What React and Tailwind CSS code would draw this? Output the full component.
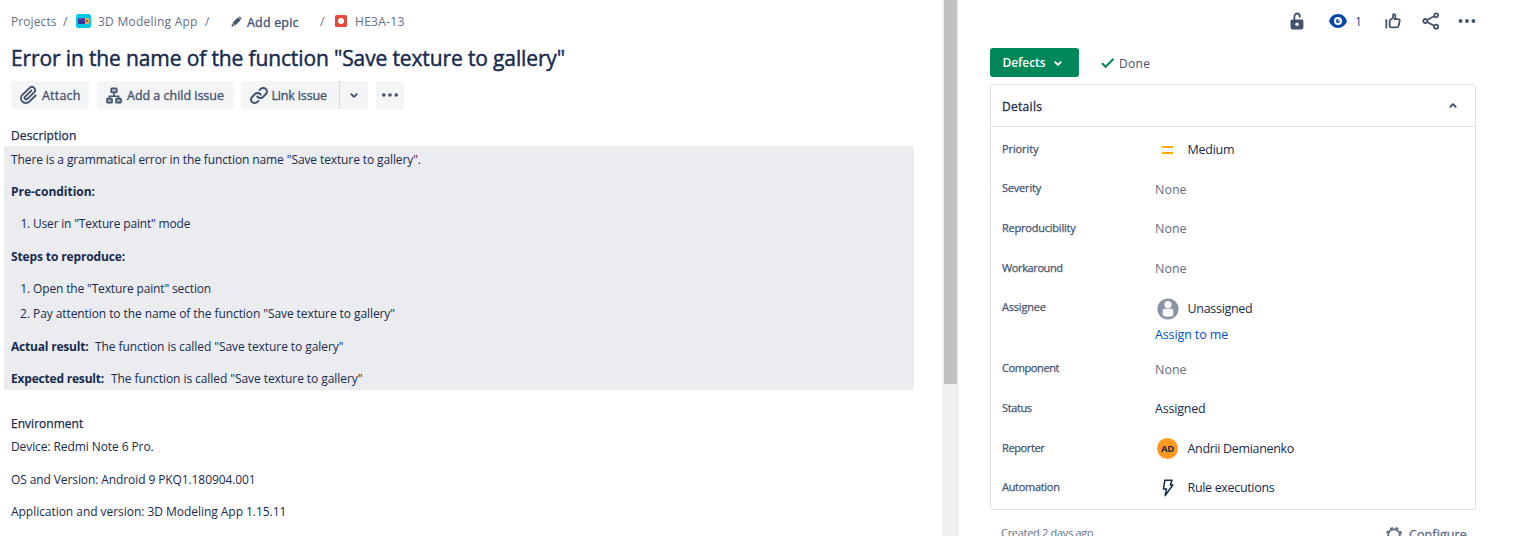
function Chevron({ className }) {
  return (
    <svg viewBox="0 0 24 24" className={className} fill="currentColor">
      <path d="M8.292 10.293a1.009 1.009 0 000 1.419l2.939 2.965c.218.215.5.322.779.322s.556-.107.769-.322l2.93-2.955a1.01 1.01 0 000-1.419.987.987 0 00-1.406 0l-2.298 2.317-2.307-2.327a.99.99 0 00-1.406 0z" />
    </svg>
  );
}

function Dots({ className }) {
  return (
    <svg viewBox="0 0 24 24" className={className} fill="currentColor">
      <circle cx="5.2" cy="12" r="2" />
      <circle cx="12" cy="12" r="2" />
      <circle cx="18.8" cy="12" r="2" />
    </svg>
  );
}

function AttachIcon() {
  return (
    <svg viewBox="0 0 24 24" className="size-6 shrink-0" fill="currentColor">
      <path d="M11.643 17.965c-1.53 1.495-4.016 1.496-5.542.004a3.773 3.773 0 01.002-5.412l7.147-6.985a2.316 2.316 0 013.22-.004c.893.873.895 2.282.004 3.153l-6.703 6.55a.653.653 0 01-.914-.008.62.62 0 010-.902l6.229-6.087a.941.941 0 000-1.353.995.995 0 00-1.384 0l-6.23 6.087a2.502 2.502 0 000 3.607 2.643 2.643 0 003.683.009l6.703-6.55a4.074 4.074 0 00-.003-5.859 4.306 4.306 0 00-5.986-.003l-7.148 6.985a5.655 5.655 0 00-.001 8.118c2.29 2.239 6.015 2.238 8.304 0l6.329-6.185a.941.941 0 000-1.353.995.995 0 00-1.384 0l-6.329 6.185z" />
    </svg>
  );
}

function ChildIcon() {
  return (
    <svg viewBox="0 0 16 17" className="h-[17px] w-4 shrink-0" fill="#a3adbc" stroke="currentColor" strokeWidth="1.6">
      <path d="M8 6v3M3.3 12V9.2h9.4V12" fill="none" />
      <rect x="5.2" y="1.3" width="5.6" height="4.2" rx="0.8" />
      <rect x="0.9" y="11.6" width="5.2" height="4" rx="0.8" />
      <rect x="9.9" y="11.6" width="5.2" height="4" rx="0.8" />
    </svg>
  );
}

function LinkIcon() {
  return (
    <svg viewBox="0 0 24 24" className="size-6 shrink-0" fill="currentColor">
      <path d="M12.856 5.457l-.937.92a1.002 1.002 0 000 1.437 1.047 1.047 0 001.463 0l.984-.966c.967-.95 2.542-1.135 3.602-.288a2.54 2.54 0 01.203 3.81l-2.903 2.852a2.646 2.646 0 01-3.696 0l-1.11-1.09L9 13.57l1.108 1.089c1.822 1.788 4.802 1.788 6.622 0l2.905-2.852a4.558 4.558 0 00-.357-6.82c-1.893-1.517-4.695-1.226-6.422.47" />
      <path d="M11.144 19.543l.937-.92a1.002 1.002 0 000-1.437 1.047 1.047 0 00-1.462 0l-.985.966c-.967.95-2.542 1.135-3.602.288a2.54 2.54 0 01-.203-3.81l2.903-2.852a2.646 2.646 0 013.696 0l1.11 1.09L15 11.43l-1.108-1.089c-1.822-1.788-4.802-1.788-6.622 0l-2.905 2.852a4.558 4.558 0 00.357 6.82c1.893 1.517 4.695 1.226 6.422-.47" />
    </svg>
  );
}

function Breadcrumbs() {
  return (
    <nav className="flex h-4 text-xs leading-4 text-[#626f86] [&>span]:pt-px">
      <span className="w-[52px] tracking-[0.09px]">Projects</span>
      <span className="w-[13px]">/</span>
      <svg viewBox="0 0 15 14" className="mt-px h-3.5 w-[15px] shrink-0">
        <rect width="15" height="14" rx="2.5" fill="#00c7e6" />
        <circle cx="10.6" cy="7" r="3" fill="#faa53d" />
        <circle cx="11" cy="7.1" r="1.1" fill="#8a5a3a" />
        <rect x="2" y="4" width="7" height="6" rx="1" fill="#403294" />
        <rect x="2" y="4" width="6.5" height="2" rx="1" fill="#5243aa" />
      </svg>
      <span className="ml-[7px] w-[107px] tracking-[0.24px]">3D Modeling App</span>
      <span className="w-[26px]">/</span>
      <svg viewBox="0 0 11 11" className="mt-[3px] size-[11px] shrink-0" fill="#44546f">
        <path d="M0.4 10.6L1.1 7.4L3.6 9.9z" />
        <path d="M1.4 7L7 1.2L9.8 4L4.2 9.6z" />
        <path d="M7.6 0.9q.8-.8 1.6 0l.9.9q.8.8 0 1.6z" />
      </svg>
      <span className="mt-px ml-[5px] w-[73px] text-[12.5px] tracking-[0.18px] text-[#44546f] [-webkit-text-stroke:0.35px]">Add epic</span>
      <span className="w-[15px]">/</span>
      <svg viewBox="0 0 12 12" className="mt-0.5 size-3 shrink-0">
        <rect width="12" height="12" rx="1.5" fill="#e5493a" />
        <circle cx="6" cy="6" r="3" fill="#fff" />
      </svg>
      <span className="ml-2 tracking-[0.3px]">HE3A-13</span>
    </nav>
  );
}

function Toolbar() {
  return (
    <div className="mt-2 flex h-7 text-[12.5px] leading-4 text-[#44546f] [&_span]:mt-0.5 [&_span]:[-webkit-text-stroke:0.35px]">
      <button className="flex w-[78px] items-center rounded-[3px] bg-[#f4f5f7] pl-[6px]">
        <AttachIcon />
        <span className="ml-px tracking-[0.2px]">Attach</span>
      </button>
      <button className="ml-2 flex w-[137px] items-center rounded-[3px] bg-[#f4f5f7] pl-[9px]">
        <ChildIcon />
        <span className="ml-[5px] tracking-[-0.02px]">Add a child issue</span>
      </button>
      <button className="ml-[7px] flex w-[98px] items-center rounded-l-[3px] bg-[#f4f5f7] pl-[6px]">
        <LinkIcon />
        <span className="ml-[0.5px] tracking-[-0.16px]">Link issue</span>
      </button>
      <button className="flex w-[29px] items-center justify-center rounded-r-[3px] border-l border-[#d5d9e0] bg-[#f4f5f7]">
        <Chevron className="size-[22px]" />
      </button>
      <button className="ml-2 flex h-[29px] w-7 items-center justify-center rounded-[3px] bg-[#f4f5f7]">
        <Dots className="-mt-px size-[22px]" />
      </button>
    </div>
  );
}

function Issue() {
  return (
    <main className="h-[536px] w-[942px] shrink-0 overflow-hidden pt-[13px] pl-[11px]">
      <Breadcrumbs />
      <h1 className="mt-[15px] h-[29px] text-[21px] leading-7 tracking-[-0.13px] [-webkit-text-stroke:0.45px]">
        Error in the name of the function "Save texture to gallery"
      </h1>
      <Toolbar />
      <h2 className="mt-[19px] text-xs leading-4 tracking-[0.12px] [-webkit-text-stroke:0.25px]">Description</h2>
      <section className="mt-[2px] -ml-[7px] h-[244px] w-[910px] rounded-[3px] bg-[#ebecf0] pt-[6px] pl-[7px] text-xs leading-4">
        <p className="tracking-[-0.11px]">There is a grammatical error in the function name "Save texture to gallery".</p>
        <p className="mt-4 font-bold tracking-[-0.02px]">Pre-condition:</p>
        <ol className="mt-4 list-decimal pl-[22px] tracking-[-0.19px]">
          <li>User in "Texture paint" mode</li>
        </ol>
        <p className="mt-[17px] font-bold tracking-[-0.13px]">Steps to reproduce:</p>
        <ol className="mt-4 list-decimal pl-[22px]">
          <li className="tracking-[-0.15px]">Open the "Texture paint" section</li>
          <li className="mt-[9px] tracking-[-0.085px]">Pay attention to the name of the function "Save texture to gallery"</li>
        </ol>
        <p className="mt-[17px] flex">
          <b className="w-[84px] tracking-[-0.2px]">Actual result:</b>
          <span className="tracking-[-0.07px]">The function is called "Save texture to galery"</span>
        </p>
        <p className="mt-4 flex">
          <b className="w-[100px] tracking-[-0.2px]">Expected result:</b>
          <span className="tracking-[-0.07px]">The function is called "Save texture to gallery"</span>
        </p>
      </section>
      <h2 className="mt-[26px] text-xs leading-4 tracking-[0.02px] [-webkit-text-stroke:0.25px]">Environment</h2>
      <section className="mt-[7px] text-xs leading-4">
        <p className="tracking-[-0.09px]">Device: Redmi Note 6 Pro.</p>
        <p className="mt-[17px] tracking-[-0.1px]">OS and Version: Android 9 PKQ1.180904.001</p>
        <p className="mt-4 tracking-[-0.04px]">Application and version: 3D Modeling App 1.15.11</p>
      </section>
    </main>
  );
}

function Actions() {
  return (
    <div className="flex h-[18px] items-center justify-end text-[#44546f]">
      <svg viewBox="0 0 14 18" className="mr-[25px] h-[18px] w-3.5">
        <path d="M4.4 8V4.2a2.7 2.7 0 015.4 0v.6" fill="none" stroke="currentColor" strokeWidth="1.8" strokeLinecap="round" />
        <rect x="0.6" y="7.4" width="12.8" height="10" rx="1.8" fill="currentColor" />
        <circle cx="7" cy="12.3" r="1.7" fill="#fff" />
      </svg>
      <svg viewBox="0 0 18 14" className="h-3.5 w-[18px]">
        <path d="M9 0C4.5 0 1.6 3 .3 6.2q-.3.8 0 1.6C1.6 11 4.5 14 9 14s7.4-3 8.7-6.2q.3-.8 0-1.6C16.4 3 13.5 0 9 0z" fill="#0747a6" />
        <circle cx="9" cy="7" r="3" fill="none" stroke="#fff" strokeWidth="2" />
        <circle cx="9.7" cy="6.3" r="0.9" fill="#fff" />
      </svg>
      <span className="mt-0.5 mr-[23px] ml-2 w-[7px] text-xs leading-4 text-[#0747a6]">1</span>
      <svg viewBox="0 0 16 16" className="mr-[21px] size-4" fill="none" stroke="currentColor" strokeWidth="1.8" strokeLinejoin="round" strokeLinecap="round">
        <path d="M1.3 7.2v7.3" />
        <path d="M4.7 13V7.4L8 4.7V2.3q0-1.2 1-1.2 1.4 0 1.4 1.8 0 1.5-.7 3.2h3.600q1.7 0 1.4 1.6l-1 5q-.3 1.7-1.8 1.7H6.3q-1.6 0-1.6-1.4z" />
      </svg>
      <svg viewBox="0 0 18 18" className="mr-[18px] size-[18px]" fill="none" stroke="currentColor" strokeWidth="1.8">
        <path d="M5.2 8l6.8-3.7M5.2 10l6.8 3.7" />
        <circle cx="3.2" cy="9" r="2" />
        <circle cx="14.2" cy="3.3" r="2" />
        <circle cx="14.2" cy="14.7" r="2" />
      </svg>
      <svg viewBox="0 0 18 6" className="h-1.5 w-[18px]" fill="currentColor">
        <circle cx="2.6" cy="3" r="1.9" />
        <circle cx="9" cy="3" r="1.9" />
        <circle cx="15.4" cy="3" r="1.9" />
      </svg>
    </div>
  );
}

function Row({ label, labelClass, className, valueClass, children }) {
  return (
    <div className={`flex ${className}`}>
      <div className={`w-[153px] text-[11px] leading-4 text-[#44546f] [-webkit-text-stroke:0.25px] ${labelClass}`}>{label}</div>
      <div className={`pt-px text-[12.5px] leading-4 ${valueClass}`}>{children}</div>
    </div>
  );
}

const none = "text-[#626f86] tracking-[0px]";

function Details() {
  return (
    <section className="mt-[7px] h-[426px] w-[486px] rounded-[3px] border border-[#dfe1e6]">
      <header className="flex h-[42px] items-center justify-between border-b border-[#dfe1e6] pr-[11px] pl-[11px] text-xs">
        <span className="mt-0.5 leading-4 tracking-[0.3px] [-webkit-text-stroke:0.3px]">Details</span>
        <Chevron className="size-[22px] rotate-180 text-[#44546f]" />
      </header>
      <div className="pt-3.5 pl-[11px]">
        <Row label="Priority" labelClass="tracking-[-0.1px]" className="h-[39px]" valueClass="flex">
          <svg viewBox="0 0 11 8" className="mt-1 ml-[7px] h-2 w-[11px]">
            <path d="M0 1h11M0 7h11" stroke="#ffab00" strokeWidth="1.8" />
          </svg>
          <span className="ml-[14.5px] tracking-[-0.25px]">Medium</span>
        </Row>
        <Row label="Severity" labelClass="tracking-[-0.2px]" className="h-10" valueClass={`mt-px ${none}`}>None</Row>
        <Row label="Reproducibility" labelClass="tracking-[-0.22px]" className="h-10" valueClass={none}>None</Row>
        <Row label="Workaround" labelClass="tracking-[-0.38px]" className="h-[39px]" valueClass={none}>None</Row>
        <Row label="Assignee" labelClass="tracking-[-0.2px]" className="h-[61px]" valueClass="">
          <div className="mt-px flex">
            <svg viewBox="0 0 22 22" className="-mt-[3px] -mb-[3px] ml-[1.5px] size-[22px]">
              <circle cx="11" cy="11" r="10.6" fill="#8993a4" />
              <circle cx="11" cy="6.6" r="3.6" fill="#fff" />
              <path d="M5.7 12.3q0-1.5 1.5-1.5h7.6q1.5 0 1.5 1.5v4q0 2.5-5.3 2.5t-5.3-2.5z" fill="#fff" />
            </svg>
            <span className="ml-[9px] tracking-[-0.3px]">Unassigned</span>
          </div>
          <a className="mt-2.5 block tracking-[-0.12px] text-[#0052cc]">Assign to me</a>
        </Row>
        <Row label="Component" labelClass="tracking-[-0.4px]" className="h-10" valueClass={`mt-px ${none}`}>None</Row>
        <Row label="Status" labelClass="tracking-[-0.38px]" className="h-10" valueClass="tracking-[-0.2px]">Assigned</Row>
        <Row label="Reporter" labelClass="tracking-[-0.38px]" className="h-[39px]" valueClass="flex">
          <span className="-mt-[3px] ml-[2px] flex size-[21px] items-center justify-center rounded-full bg-[#ff991f] text-[9.5px] font-bold tracking-[-0.2px] text-[#172b4d]">AD</span>
          <span className="ml-[9.5px] tracking-[-0.33px]">Andrii Demianenko</span>
        </Row>
        <Row label="Automation" labelClass="tracking-[-0.3px]" className="h-4" valueClass="flex">
          <svg viewBox="0 0 12 18" className="-mt-px ml-[7px] h-[18px] w-3" fill="none" stroke="currentColor" strokeWidth="1.5" strokeLinejoin="round">
            <path d="M2.8 1.2h7.200L8.3 6h2.5L3.2 16.600 4.5 10H1.5z" />
          </svg>
          <span className="ml-[13.5px] tracking-[-0.33px]">Rule executions</span>
        </Row>
      </div>
    </section>
  );
}

function Sidebar() {
  return (
    <aside className="h-[536px] w-[517px] shrink-0 overflow-hidden pt-3 pl-[31px]">
      <Actions />
      <div className="mt-[18px] flex h-[29px] text-xs leading-4">
        <button className="flex w-[89px] rounded-[3px] bg-[#00875a] pt-[7px] pl-[11px] font-semibold tracking-[-0.1px] text-white">
          <span className="w-[46px]">Defects</span>
          <Chevron className="-mt-[3px] size-[22px]" />
        </button>
        <svg viewBox="0 0 14 12" className="mt-[9px] ml-[22px] h-3 w-3.5" fill="none" stroke="#00875a" strokeWidth="2">
          <path d="M1 6.3l3.600 3.500 8-8" />
        </svg>
        <span className="mt-2 ml-1 tracking-[0.3px] text-[#44546f]">Done</span>
      </div>
      <Details />
      <footer className="mt-[15px] flex text-[#626f86]">
        <span className="w-[383px] pl-[11px] text-[11px] leading-4 tracking-[-0.3px]">Created 2 days ago</span>
        <svg viewBox="0 0 18 18" className="mt-px ml-3 size-[18px]" fill="none" stroke="currentColor">
          <circle cx="9" cy="9" r="5.8" strokeWidth="1.9" />
          <circle cx="9" cy="9" r="7.3" strokeWidth="1.8" strokeDasharray="2.9 2.834" strokeDashoffset="-1.5" />
        </svg>
        <span className="mt-0.5 ml-1.5 text-[12.5px] leading-4 tracking-[0.1px] [-webkit-text-stroke:0.35px]">Configure</span>
      </footer>
    </aside>
  );
}

export default function App() {
  return (
    <div className="flex h-[536px] w-[1532px] overflow-hidden bg-white font-['Open_Sans',sans-serif] whitespace-nowrap text-[#172b4d]">
      <Issue />
      <div className="h-[536px] w-[17px] shrink-0 bg-[#f0f0f0] px-0.5">
        <div className="h-96 bg-[#c1c1c1]" />
      </div>
      <Sidebar />
    </div>
  );
}
